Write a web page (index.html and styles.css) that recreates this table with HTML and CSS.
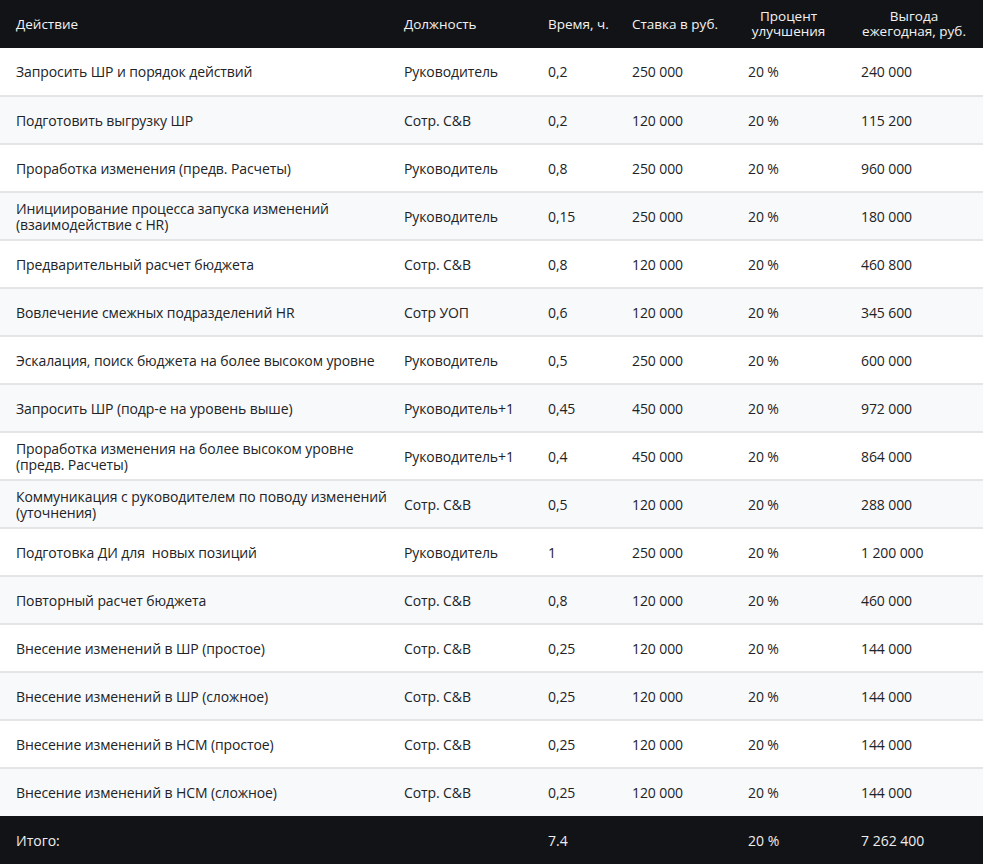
FILE: index.html
```html
<!DOCTYPE html>
<html lang="ru">
<head>
<meta charset="utf-8">
<link rel="stylesheet" href="styles.css">
</head>
<body>
<table class="tbl">
  <colgroup>
    <col class="c1"><col class="c2"><col class="c3"><col class="c4"><col class="c5"><col class="c6">
  </colgroup>
  <thead>
    <tr>
      <th>Действие</th>
      <th>Должность</th>
      <th>Время, ч.</th>
      <th>Ставка в руб.</th>
      <th class="center">Процент<br>улучшения</th>
      <th class="center">Выгода<br>ежегодная, руб.</th>
    </tr>
  </thead>
  <tbody>
    <tr><td>Запросить ШР и порядок действий</td><td>Руководитель</td><td>0,2</td><td>250 000</td><td>20 %</td><td>240 000</td></tr>
    <tr><td>Подготовить выгрузку ШР</td><td>Сотр. C&amp;B</td><td>0,2</td><td>120 000</td><td>20 %</td><td>115 200</td></tr>
    <tr><td>Проработка изменения (предв. Расчеты)</td><td>Руководитель</td><td>0,8</td><td>250 000</td><td>20 %</td><td>960 000</td></tr>
    <tr><td>Инициирование процесса запуска изменений<br>(взаимодействие с HR)</td><td>Руководитель</td><td>0,15</td><td>250 000</td><td>20 %</td><td>180 000</td></tr>
    <tr><td>Предварительный расчет бюджета</td><td>Сотр. C&amp;B</td><td>0,8</td><td>120 000</td><td>20 %</td><td>460 800</td></tr>
    <tr><td>Вовлечение смежных подразделений HR</td><td>Сотр УОП</td><td>0,6</td><td>120 000</td><td>20 %</td><td>345 600</td></tr>
    <tr><td>Эскалация, поиск бюджета на более высоком уровне</td><td>Руководитель</td><td>0,5</td><td>250 000</td><td>20 %</td><td>600 000</td></tr>
    <tr><td>Запросить ШР (подр-е на уровень выше)</td><td>Руководитель+1</td><td>0,45</td><td>450 000</td><td>20 %</td><td>972 000</td></tr>
    <tr><td>Проработка изменения на более высоком уровне<br>(предв. Расчеты)</td><td>Руководитель+1</td><td>0,4</td><td>450 000</td><td>20 %</td><td>864 000</td></tr>
    <tr><td>Коммуникация с руководителем по поводу изменений<br>(уточнения)</td><td>Сотр. C&amp;B</td><td>0,5</td><td>120 000</td><td>20 %</td><td>288 000</td></tr>
    <tr><td>Подготовка ДИ для&nbsp; новых позиций</td><td>Руководитель</td><td>1</td><td>250 000</td><td>20 %</td><td>1 200 000</td></tr>
    <tr><td>Повторный расчет бюджета</td><td>Сотр. C&amp;B</td><td>0,8</td><td>120 000</td><td>20 %</td><td>460 000</td></tr>
    <tr><td>Внесение изменений в ШР (простое)</td><td>Сотр. C&amp;B</td><td>0,25</td><td>120 000</td><td>20 %</td><td>144 000</td></tr>
    <tr><td>Внесение изменений в ШР (сложное)</td><td>Сотр. C&amp;B</td><td>0,25</td><td>120 000</td><td>20 %</td><td>144 000</td></tr>
    <tr><td>Внесение изменений в HCM (простое)</td><td>Сотр. C&amp;B</td><td>0,25</td><td>120 000</td><td>20 %</td><td>144 000</td></tr>
    <tr><td>Внесение изменений в HCM (сложное)</td><td>Сотр. C&amp;B</td><td>0,25</td><td>120 000</td><td>20 %</td><td>144 000</td></tr>
  </tbody>
  <tfoot>
    <tr><td>Итого:</td><td></td><td>7.4</td><td></td><td>20 %</td><td>7 262 400</td></tr>
  </tfoot>
</table>
</body>
</html>
```
FILE: styles.css
```css
html, body {
  margin: 0;
  padding: 0;
  background: #ffffff;
}
.tbl {
  width: 983px;
  border-collapse: collapse;
  table-layout: fixed;
  font-family: "Open Sans", "Noto Sans", sans-serif;
}
.c1 { width: 388px; }
.c2 { width: 144px; }
.c3 { width: 84px; }
.c4 { width: 116px; }
.c5 { width: 113px; }
.c6 { width: 138px; }

.tbl th,
.tbl td {
  padding: 0 4px 0 16px;
  text-align: left;
  vertical-align: middle;
  white-space: nowrap;
}
.tbl thead tr {
  background: #121316;
  height: 48px;
}
.tbl th {
  color: #f2f2f2;
  font-weight: 400;
  font-size: 13.5px;
  line-height: 15px;
}
.tbl th.center {
  text-align: center;
  padding: 0 6px;
}
.tbl tbody tr {
  height: 48px;
  border-bottom: 2px solid #e4e5e7;
}
.tbl tbody tr:nth-child(even) {
  background: #f8f9fb;
}
.tbl tbody tr:last-child {
  border-bottom: none;
}
.tbl tbody td {
  color: #212326;
  font-size: 14px;
  line-height: 16px;
  letter-spacing: -0.1px;
  padding-top: 1px;
}
.tbl tfoot tr {
  background: #121316;
  height: 48px;
}
.tbl tfoot td {
  color: #eeeeee;
  font-size: 14px;
  line-height: 16px;
  padding-top: 1px;
}
```
